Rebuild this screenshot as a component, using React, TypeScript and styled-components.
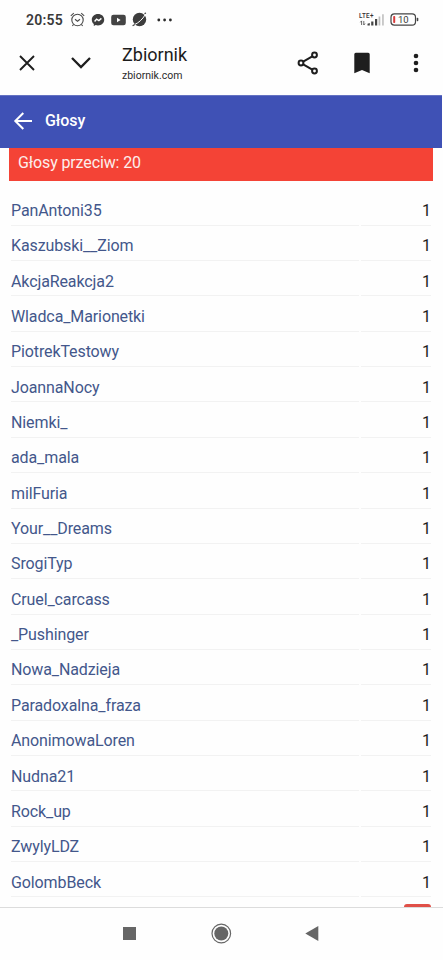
import React from "react";
import styled, { createGlobalStyle } from "styled-components";

const GlobalStyle = createGlobalStyle`
  * { box-sizing: border-box; }
  html, body { margin: 0; padding: 0; background: #fff; }
  body { font-family: Roboto, "Liberation Sans", sans-serif; overflow: hidden; }
`;

const Phone = styled.div`
  width: 443px;
  height: 960px;
  display: flex;
  flex-direction: column;
  overflow: hidden;
  background: #fefefe;
`;

const StatusBar = styled.header`
  height: 40px;
  flex: none;
  display: flex;
  align-items: center;
  justify-content: space-between;
  padding: 0 24px 1px 26px;
`;

const StatusGroup = styled.div<{ $gap: number }>`
  display: flex;
  align-items: center;
  gap: ${(p) => p.$gap}px;
`;

const Clock = styled.span`
  width: 38px;
  font-size: 14px;
  line-height: 16px;
  font-weight: 600;
  letter-spacing: 0.25px;
  color: #3a3a3a;
`;

const Icon = styled.svg`
  display: block;
  flex: none;
  overflow: visible;
`;

const MoreIcon = styled(Icon)`
  margin-left: 4px;
`;

const BrowserBar = styled.div`
  height: 55px;
  flex: none;
  display: grid;
  grid-template-columns: 54px 68px 173px 54px 54px 1fr;
  align-items: center;
`;

const BarButton = styled.button<{ $indent: number }>`
  border: 0;
  padding: 0 0 10px ${(p) => p.$indent}px;
  height: 55px;
  background: none;
  display: flex;
  align-items: center;
`;

const SiteInfo = styled.div`
  height: 55px;
  padding-top: 4px;
`;

const SiteTitle = styled.div`
  font-size: 18px;
  line-height: 22px;
  color: #1c1c1c;
`;

const SiteHost = styled.div`
  font-size: 10.5px;
  line-height: 14px;
  margin-top: 3px;
  color: #2b2b2b;
`;

const AppBar = styled.div`
  width: 442px;
  height: 53px;
  flex: none;
  display: flex;
  align-items: center;
  gap: 13px;
  padding: 0 0 2px 14px;
  background: #3f51b5;
  border-top: 1px solid #6472c2;
  color: #fff;
`;

const AppTitle = styled.h1`
  margin: 0;
  font-size: 16px;
  line-height: 20px;
  font-weight: 500;
  letter-spacing: -0.1px;
`;

const Content = styled.main`
  height: 760px;
  flex: none;
  display: flex;
  flex-direction: column;
  overflow: hidden;
  border-bottom: 1px solid #dcdcdc;
`;

const VotesBanner = styled.div`
  height: 33px;
  flex: none;
  margin: 0 10px 0 9px;
  padding: 5px 9px 0;
  background: #f44336;
  color: #fdeeec;
  font-size: 16px;
  line-height: 20px;
  letter-spacing: -0.12px;
`;

const VoteList = styled.div`
  flex: none;
  margin: 9.3px 12px 0 11px;
`;

const VoteRow = styled.div`
  height: 35.36px;
  display: grid;
  grid-template-columns: 348px 70px;
  justify-content: space-between;
`;

const VoteCell = styled.div<{ $count?: boolean }>`
  border-bottom: 1px solid #f2f2f2;
  padding-top: 10.5px;
  font-size: 16px;
  line-height: 20px;
  letter-spacing: ${(p) => (p.$count ? "0" : "-0.11px")};
  text-align: ${(p) => (p.$count ? "right" : "left")};
  color: ${(p) => (p.$count ? "#1d1d1d" : "#43578b")};
`;

const ActionPeek = styled.div`
  width: 27px;
  height: 12px;
  flex: none;
  align-self: flex-end;
  margin: 6.5px 12px 0 0;
  border-radius: 3px;
  background: #e05048;
`;

const NavBar = styled.nav`
  flex: 1;
  display: flex;
  align-items: flex-start;
  padding: 14px 0 0 122px;
  gap: 76px;
`;

const names = [
  "PanAntoni35",
  "Kaszubski__Ziom",
  "AkcjaReakcja2",
  "Wladca_Marionetki",
  "PiotrekTestowy",
  "JoannaNocy",
  "Niemki_",
  "ada_mala",
  "milFuria",
  "Your__Dreams",
  "SrogiTyp",
  "Cruel_carcass",
  "_Pushinger",
  "Nowa_Nadzieja",
  "Paradoxalna_fraza",
  "AnonimowaLoren",
  "Nudna21",
  "Rock_up",
  "ZwylyLDZ",
  "GolombBeck",
];

const BatteryLabel = styled.text`
  font-size: 9.5px;
  font-weight: 400;
  fill: #3a3a3a;
`;

const NetworkLabel = styled.text`
  font-size: 6.3px;
  font-weight: 500;
  fill: #333;
`;

export default function App() {
  return (
    <>
      <GlobalStyle />
      <Phone>
        <StatusBar>
          <StatusGroup $gap={6}>
            <Clock>20:55</Clock>
            <Icon width="15" height="15" viewBox="0 0 15 15" fill="none" stroke="#4a4a4a" strokeWidth="1.1">
              <circle cx="7.5" cy="8" r="5.7" />
              <path d="M.8 3.9 3.8 1.2M14.2 3.9 11.2 1.2M3.5 12.5 2.4 14M11.5 12.5l1.1 1.5M5 7.3l2.5 2 2.500-2" />
            </Icon>
            <Icon width="14" height="14" viewBox="0 0 14 14">
              <path d="M7 1C3.400 1 .8 3.500.8 6.800c0 1.800.8 3.200 2 4.200v2l1.900-1c.7.2 1.500.4 2.300.4 3.600 0 6.200-2.400 6.200-5.700S10.600 1 7 1Z" fill="#3d3d3d" />
              <path d="m3.600 8.500 2-2.400 2.300 1.500 2.500-2.200" fill="none" stroke="#fff" strokeWidth="1.400" />
            </Icon>
            <Icon width="15" height="12" viewBox="0 0 15 12">
              <rect x=".2" y=".8" width="14.600" height="10.400" rx="2.300" fill="#444" />
              <path d="M6 3.800v4.400L9.600 6Z" fill="#fff" />
            </Icon>
            <Icon width="15" height="15" viewBox="0 0 15 15">
              <circle cx="7.500" cy="7.500" r="6.700" fill="#3d3d3d" />
              <path d="M2.200 12.800C6.500 11 10.500 7.300 13.300 2.600" fill="none" stroke="#fff" strokeWidth="1" />
              <path d="M.6 13.700 2.800 12.500M12.500 1.600l1.500-.6" stroke="#3d3d3d" strokeWidth="1.200" />
            </Icon>
            <MoreIcon width="16" height="4" viewBox="0 0 16 4" fill="#2c2c2c">
              <circle cx="1.800" cy="2" r="1.400" />
              <circle cx="7.600" cy="2" r="1.400" />
              <circle cx="13.400" cy="2" r="1.400" />
            </MoreIcon>
          </StatusGroup>
          <StatusGroup $gap={6}>
            <Icon width="25" height="14" viewBox="0 0 25 14">
              <NetworkLabel x="0" y="5.200" textLength="14.500">LTE+</NetworkLabel>
              <path d="M2.600 12V8M1.400 9.300l1.200-1.500M4.800 8V12M4.800 12 6 10.500" stroke="#444" strokeWidth=".8" fill="none" />
              <path d="M8.500 12.500v-1.700l2.300-.8v2.500ZM12.200 12.500V8.500h2.200v4ZM16 12.500V6h2.200v6.500Z" fill="#444" />
              <path d="M19.600 12.500V3.500h1.700v9ZM23.200 12.500V1.200h1.500v11.300Z" fill="#bbb" />
            </Icon>
            <Icon width="29" height="13" viewBox="0 0 29 13">
              <rect x="1" y=".8" width="24.500" height="11.400" rx="3.400" fill="none" stroke="#444" strokeWidth="1.200" />
              <rect x="3.200" y="3" width="2" height="7" rx=".8" fill="#d93b3b" />
              <BatteryLabel x="8" y="9.900">10</BatteryLabel>
              <rect x="26.700" y="4.700" width="1.600" height="3.600" rx=".7" fill="#444" />
            </Icon>
          </StatusGroup>
        </StatusBar>

        <BrowserBar>
          <BarButton $indent={19} aria-label="Zamknij">
            <Icon width="16" height="16" viewBox="0 0 16 16" fill="none" stroke="#1e1e1e" strokeWidth="1.900">
              <path d="m1 1 14 14M15 1 1 15" />
            </Icon>
          </BarButton>
          <BarButton $indent={17} aria-label="Zwiń">
            <Icon width="20" height="12" viewBox="0 0 20 12" fill="none" stroke="#1e1e1e" strokeWidth="2.300">
              <path d="m1 1 9 9 9-9" />
            </Icon>
          </BarButton>
          <SiteInfo>
            <SiteTitle>Zbiornik</SiteTitle>
            <SiteHost>zbiornik.com</SiteHost>
          </SiteInfo>
          <BarButton $indent={2} aria-label="Udostępnij">
            <Icon width="22" height="24" viewBox="0 0 22 24" fill="none" stroke="#1e1e1e" strokeWidth="2">
              <circle cx="4" cy="12" r="2.400" />
              <circle cx="17.500" cy="4" r="2.400" />
              <circle cx="17.500" cy="20" r="2.400" />
              <path d="m6.200 10.700 9.100-5.400M6.200 13.300l9.100 5.400" />
            </Icon>
          </BarButton>
          <BarButton $indent={5} aria-label="Zakładka">
            <Icon width="17" height="22" viewBox="0 0 17 22">
              <path d="M1.800.8h12.400a1.500 1.500 0 0 1 1.500 1.500v19l-7.700-3.400-7.700 3.400v-19A1.500 1.500 0 0 1 1.800.8Z" fill="#1e1e1e" />
            </Icon>
          </BarButton>
          <BarButton $indent={10} aria-label="Menu">
            <Icon width="6" height="20" viewBox="0 0 6 20" fill="#1e1e1e">
              <circle cx="3" cy="3" r="2.300" />
              <circle cx="3" cy="10" r="2.300" />
              <circle cx="3" cy="17" r="2.300" />
            </Icon>
          </BarButton>
        </BrowserBar>

        <AppBar>
          <Icon width="18" height="18" viewBox="0 0 18 18" fill="none" stroke="#fff" strokeWidth="2">
            <path d="M18 9H1.500M9.300 1 1.300 9l8 8" />
          </Icon>
          <AppTitle>Głosy</AppTitle>
        </AppBar>

        <Content>
          <VotesBanner>Głosy przeciw: 20</VotesBanner>
          <VoteList>
            {names.map((name) => (
              <VoteRow key={name}>
                <VoteCell>{name}</VoteCell>
                <VoteCell $count>1</VoteCell>
              </VoteRow>
            ))}
          </VoteList>
          <ActionPeek />
        </Content>

        <NavBar>
          <Icon width="15" height="22" viewBox="0 0 15 22">
            <rect x="1" y="5" width="13" height="13" fill="#666" />
          </Icon>
          <Icon width="18" height="22" viewBox="0 0 18 22">
            <circle cx="8.300" cy="11.500" r="9.300" fill="none" stroke="#666" strokeWidth="1.200" />
            <circle cx="8.300" cy="11.500" r="7" fill="#666" />
          </Icon>
          <Icon width="15" height="22" viewBox="0 0 15 22">
            <path d="M-1.700 11.500 11.300 4v15Z" fill="#666" />
          </Icon>
        </NavBar>
      </Phone>
    </>
  );
}
